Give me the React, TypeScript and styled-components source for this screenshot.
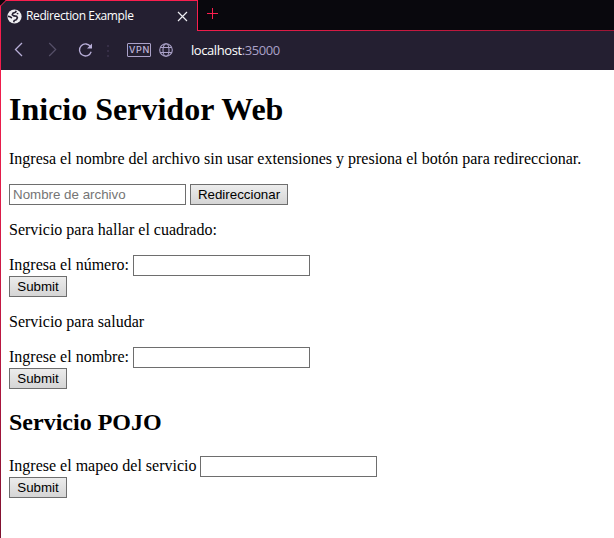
import React from "react";
import styled, { createGlobalStyle } from "styled-components";

const GlobalStyle = createGlobalStyle`
  * { box-sizing: border-box; }
  body { margin: 0; background: #fff; overflow: hidden; }
`;

const Window = styled.div`
  position: relative;
  width: 614px;
  height: 538px;
  background: #fff;
  overflow: hidden;
`;

const WindowEdge = styled.div`
  position: absolute;
  left: 0;
  top: 5px;
  bottom: 0;
  width: 1px;
  background: linear-gradient(#fa1e4e, #e01c4a 35%, #b0163f 70%, #7d1230);
`;

const CornerCut = styled.svg`
  position: absolute;
  left: 0;
  top: 0;
`;

const TabStrip = styled.div`
  display: flex;
  height: 31px;
  background: #09080d;
`;

const Tab = styled.div`
  display: flex;
  align-items: center;
  width: 198px;
  height: 31px;
  padding: 0 9px 0 7px;
  background: #241f31;
  border-top: 1px solid #fa1e4e;
  border-right: 1px solid #fa1e4e;
`;

const TabTitle = styled.span`
  flex: 1;
  margin-left: 4px;
  font: 12px/16px "Open Sans", sans-serif;
  letter-spacing: -0.38px;
  color: #fff;
  white-space: nowrap;
`;

const StripRest = styled.div`
  flex: 1;
  padding: 8px 0 0 9px;
  border-bottom: 1px solid;
  border-image: linear-gradient(90deg, #f01d4b, #9c1534) 1;
  svg { display: block; }
`;

const Toolbar = styled.div`
  display: flex;
  align-items: center;
  height: 39px;
  background: #241f31;
  svg { display: block; flex: none; }
`;

const Address = styled.div`
  margin: 0 0 2px 18px;
  font: 13px/18px "Open Sans", sans-serif;
  letter-spacing: -0.42px;
  color: #fff;
`;

const Port = styled.span`
  color: #aaa1c8;
`;

const VpnBadge = styled.span`
  width: 24px;
  height: 14px;
  margin: 0 0 1px 17px;
  border: 1px solid #aaa1c8;
  border-radius: 1px;
  font: 500 9px/12px "Inter", sans-serif;
  letter-spacing: 0.7px;
  text-align: center;
  padding-left: 1px;
  color: #c0b8dc;
`;

const Page = styled.main`
  padding: 21px 8px 0 9px;
  font: 16px/18px "Liberation Serif", "Times New Roman", serif;
  color: #000;
`;

const Title = styled.h1`
  margin: 0 0 22px;
  font-size: 32px;
  line-height: 37px;
`;

const Subtitle = styled.h2`
  margin: 20px 0;
  font-size: 24px;
  line-height: 27px;
`;

const Text = styled.p`
  margin: 0 0 16px;
`;

const Form = styled.form`
  margin-bottom: 16px;
`;

const Row = styled.div`
  display: flex;
  height: 21px;
`;

const Label = styled.label<{ $width: number }>`
  flex: none;
  width: ${(p) => p.$width}px;
  line-height: 20px;
  white-space: nowrap;
`;

const Field = styled.input`
  width: 177px;
  height: 21px;
  margin: 0;
  padding: 1px 3px;
  border: 1px solid #6e6e6e;
  border-radius: 0;
  background: #fff;
  font: 13.333px "Liberation Sans", Arial, sans-serif;
  &::placeholder { color: #757575; opacity: 1; }
`;

const Button = styled.button<{ $width?: number; $gap?: number }>`
  width: ${(p) => p.$width ?? 58}px;
  height: 21px;
  margin: 0 0 0 ${(p) => p.$gap ?? 0}px;
  padding: 0;
  border: 1px solid #6e6e6e;
  border-radius: 0;
  background: linear-gradient(#ececec, #d5d5d5);
  font: 13.333px/17px "Liberation Sans", Arial, sans-serif;
  color: #000;
`;

const SiteIcon = () => (
  <svg width="15" height="15" viewBox="0 0 15 15">
    <circle cx="7.5" cy="7.5" r="7.1" fill="#eeedf1" />
    <path
      d="M9.2 1.8 8.6 3.2 6 4.2l-.7 1.6 1.6 1.1 2.7.3.8 1.6-1 1.9-2.2.9-.5 1.6M.9 7.2l2 .5 2 1.3"
      fill="none"
      stroke="#241f31"
      strokeWidth="1.6"
    />
    <path d="m9.8 4.2 1.5.9" stroke="#241f31" strokeWidth="1.2" />
  </svg>
);

const CloseIcon = () => (
  <svg width="11" height="11" viewBox="0 0 11 11">
    <path d="m1 1 9 9M10 1l-9 9" stroke="#eeeef2" strokeWidth="1.2" />
  </svg>
);

const PlusIcon = () => (
  <svg width="11" height="11" viewBox="0 0 11 11">
    <path d="M5.5 0v11M0 5.5h11" stroke="#fa1e4e" />
  </svg>
);

const NavIcons = () => (
  <svg width="110" height="39" viewBox="0 0 110 39" fill="none">
    <path d="m22 12-6.5 6.5L22 25" stroke="#b8aed8" strokeWidth="1.3" />
    <path d="m49.2 12 6.5 6.5-6.5 6.5" stroke="#565068" strokeWidth="1.2" />
    <path d="M90.6 15.8a6 6 0 1 0 .6 5" stroke="#b8aed8" strokeWidth="1.3" />
    <path d="M92 12.5v5h-5z" fill="#b8aed8" />
    <path d="M108 14v12" stroke="#3c354d" strokeWidth="1.5" strokeDasharray="2 3" />
  </svg>
);

const GlobeIcon = styled.svg`
  margin: 0 0 1px 8px;
`;

interface ServiceFormProps {
  label: string;
  labelWidth: number;
}

const ServiceForm = ({ label, labelWidth }: ServiceFormProps) => (
  <Form onSubmit={(e) => e.preventDefault()}>
    <Row>
      <Label $width={labelWidth}>{label}</Label>
      <Field aria-label={label} />
    </Row>
    <Row>
      <Button>Submit</Button>
    </Row>
  </Form>
);

export default function App() {
  return (
    <Window>
      <GlobalStyle />
      <TabStrip>
        <Tab>
          <SiteIcon />
          <TabTitle>Redirection Example</TabTitle>
          <CloseIcon />
        </Tab>
        <StripRest>
          <PlusIcon />
        </StripRest>
      </TabStrip>
      <Toolbar>
        <NavIcons />
        <VpnBadge>VPN</VpnBadge>
        <GlobeIcon width="14" height="14" viewBox="0 0 14 14" fill="none" stroke="#aaa1c8" strokeWidth="1.1">
          <circle cx="7" cy="7" r="6.3" />
          <ellipse cx="7" cy="7" rx="3" ry="6.3" />
          <path d="M1.3 4.5h11.4M1.3 9.5h11.4" />
        </GlobeIcon>
        <Address>
          localhost<Port>:35000</Port>
        </Address>
      </Toolbar>
      <Page>
        <Title>Inicio Servidor Web</Title>
        <Text>Ingresa el nombre del archivo sin usar extensiones y presiona el botón para redireccionar.</Text>
        <Form onSubmit={(e) => e.preventDefault()}>
          <Row>
            <Field placeholder="Nombre de archivo" />
            <Button $width={98} $gap={4}>Redireccionar</Button>
          </Row>
        </Form>
        <Text>Servicio para hallar el cuadrado:</Text>
        <ServiceForm label="Ingresa el número:" labelWidth={124} />
        <Text>Servicio para saludar</Text>
        <ServiceForm label="Ingrese el nombre:" labelWidth={124} />
        <Subtitle>Servicio POJO</Subtitle>
        <ServiceForm label="Ingrese el mapeo del servicio" labelWidth={191} />
      </Page>
      <WindowEdge />
      <CornerCut width="7" height="7" viewBox="0 0 7 7">
        <path d="M0 0h6L0 6z" fill="#09080d" />
        <path d="M0 6.5 6.5 0" stroke="#fa1e4e" />
      </CornerCut>
    </Window>
  );
}
